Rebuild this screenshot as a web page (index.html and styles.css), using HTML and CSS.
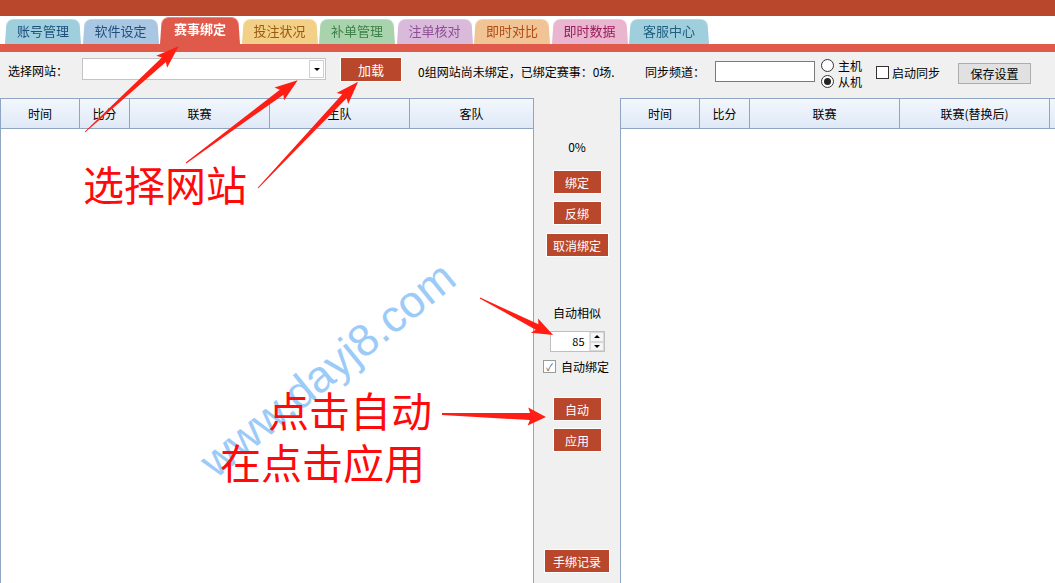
FILE: index.html
```html
<!DOCTYPE html>
<html lang="zh-CN">
<head>
    <meta charset="UTF-8">
    <title>赛事绑定</title>
    <link rel="stylesheet" href="styles.css">
</head>
<body>
<div class="app">
    <div class="topbar"></div>

    <div class="tabs">
        <div class="tab t-blue">账号管理</div>
        <div class="tab t-steel">软件设定</div>
        <div class="tab active">赛事绑定</div>
        <div class="tab t-yellow">投注状况</div>
        <div class="tab t-green">补单管理</div>
        <div class="tab t-purple">注单核对</div>
        <div class="tab t-orange">即时对比</div>
        <div class="tab t-pink">即时数据</div>
        <div class="tab t-teal">客服中心</div>
    </div>
    <div class="stripe"></div>

    <div class="toolbar">
        <span class="lbl-site">选择网站：</span>
        <div class="select"><span class="select-arrow"></span></div>
        <button class="btn btn-load">加载</button>
        <span class="info">0组网站尚未绑定，已绑定赛事：0场.</span>
        <span class="lbl-sync">同步频道：</span>
        <div class="textbox"></div>
        <div class="radios">
            <label class="radio"><i></i>主机</label>
            <label class="radio on"><i></i>从机</label>
        </div>
        <label class="check"><i></i>启动同步</label>
        <button class="btn-grey">保存设置</button>
    </div>

    <div class="main">
        <div class="grid grid-left">
            <div class="thead">
                <div class="th w80">时间</div>
                <div class="th w50">比分</div>
                <div class="th w140">联赛</div>
                <div class="th w140">主队</div>
                <div class="th fill">客队</div>
            </div>
            <div class="tbody"></div>
        </div>

        <div class="middle">
            <div class="pct">0%</div>
            <button class="btn btn-s gap-15">绑定</button>
            <button class="btn btn-s gap-7">反绑</button>
            <button class="btn btn-m gap-8">取消绑定</button>
            <div class="sim-lbl">自动相似</div>
            <div class="spin">
                <span class="spin-val">85</span>
                <span class="spin-btns"><b class="up"></b><b class="down"></b></span>
            </div>
            <label class="check check-auto on"><i>✓</i>自动绑定</label>
            <button class="btn btn-s gap-23">自动</button>
            <button class="btn btn-s gap-7">应用</button>
            <button class="btn btn-l bottom">手绑记录</button>
        </div>

        <div class="grid grid-right">
            <div class="thead">
                <div class="th w79">时间</div>
                <div class="th w50">比分</div>
                <div class="th w150">联赛</div>
                <div class="th w150">联赛(替换后)</div>
                <div class="th fill"></div>
            </div>
            <div class="tbody"></div>
        </div>
    </div>

    <!-- 截图上的标注 -->
    <div class="watermark">www.dayj8.com</div>
    <div class="note note-site">选择网站</div>
    <div class="note note-auto">点击自动</div>
    <div class="note note-apply">在点击应用</div>

    <svg class="arrows" width="1055" height="583" viewBox="0 0 1055 583">
        <polygon transform="translate(85 132) rotate(-42.5)" points="0,-0.5 107,-3 104,-8 127,0 104,8 107,3 0,0.5"/>
        <polygon transform="translate(186 163) rotate(-36.5)" points="0,-0.5 119,-3 116,-8 139,0 116,8 119,3 0,0.5"/>
        <polygon transform="translate(258 188) rotate(-46.7)" points="0,-0.5 126,-3 123,-8 146,0 123,8 126,3 0,0.5"/>
        <polygon transform="translate(480 298) rotate(26.9)" points="0,-0.5 64,-3 61,-8 82,0 61,8 64,3 0,0.5"/>
        <polygon transform="translate(442 414) rotate(1.65)" points="0,-1 88,-3.5 86,-9 104,0 86,9 88,3.5 0,1"/>
    </svg>
</div>
</body>
</html>
```

FILE: styles.css
```css
* {
    box-sizing: border-box;
}
body {
    margin: 0;
    font-family: "Noto Sans CJK SC", "Noto Sans", sans-serif;
    font-size: 12px;
    color: #000;
    background: #fff;
}
.app {
    position: relative;
    width: 1055px;
    height: 583px;
    overflow: hidden;
    display: flex;
    flex-direction: column;
}

/* 顶部色条 + 标签 */
.topbar {
    flex: none;
    height: 16px;
    background: #b9472c;
}
.tabs {
    flex: none;
    height: 28px;
    display: flex;
    align-items: flex-end;
    gap: 1.5px;
    padding-left: 5px;
}
.tab {
    position: relative;
    z-index: 0;
    width: 76px;
    height: 26px;
    display: flex;
    align-items: center;
    justify-content: center;
    padding-bottom: 2px;
    font-size: 13px;
    color: var(--fg);
}
.tab::before {
    /*梯形标签*/
    content: "";
    position: absolute;
    inset: 0;
    z-index: -1;
    background: var(--bg);
    border-radius: 7px 7px 0 0;
    transform: perspective(40px) rotateX(4deg);
    transform-origin: bottom;
}
.t-blue   { --bg: #9fcfdc; --fg: #1e4f7c; }
.t-steel  { --bg: #a9c6e3; --fg: #1e4f7c; }
.t-yellow { --bg: #f2d088; --fg: #9a5a10; }
.t-green  { --bg: #a9d3ad; --fg: #3f7f48; }
.t-purple { --bg: #d9badb; --fg: #8e4e94; }
.t-orange { --bg: #f1c496; --fg: #b24a10; }
.t-pink   { --bg: #e9b5cf; --fg: #9a1c5a; }
.t-teal   { --bg: #9fcfdc; --fg: #1f5f7f; width: 80px; }
.tab.active {
    --bg: #e05a4b;
    width: 80px;
    height: 28px;
    padding-bottom: 4px;
    color: #fff;
    font-weight: bold;
}
.stripe {
    flex: none;
    height: 8px;
    background: #e05a4b;
}

/* 工具栏 */
.toolbar {
    flex: none;
    height: 46px;
    padding-bottom: 10px;
    display: flex;
    align-items: center;
    background: #f0f0f0;
}
.toolbar > * {
    flex: none;
    white-space: nowrap;
}
.lbl-site {
    margin-left: 8px;
    width: 74px;
}
.select {
    position: relative;
    width: 244px;
    height: 22px;
    margin-top: -2px;
    background: #fff;
    border: 1px solid #c4c4c4;
}
.select-arrow {
    position: absolute;
    right: 1px;
    top: 1px;
    width: 15px;
    height: 18px;
    border: 1px solid #d0d0d0;
    background: #fff;
}
.select-arrow::after {
    content: "";
    position: absolute;
    left: 4px;
    top: 7px;
    border-left: 3px solid transparent;
    border-right: 3px solid transparent;
    border-top: 3px solid #000;
}
.btn {
    font-family: inherit;
    color: #fff;
    background: #b8472b;
    border: 1px solid #fff;
    padding: 0;
    font-size: 12px;
    white-space: nowrap;
}
.btn-load {
    width: 62px;
    height: 25px;
    margin-left: 14px;
    margin-top: -2px;
    font-size: 13px;
}
.info {
    width: 227px;
    margin-left: 16px;
    padding-top: 2px;
}
.lbl-sync {
    width: 70px;
    padding-top: 3px;
}
.textbox {
    width: 100px;
    height: 21px;
    margin-top: 2px;
    background: #fff;
    border: 1px solid #7a7a7a;
}
.radios {
    width: 55px;
    margin-left: 6px;
    margin-top: 6px;
    display: flex;
    flex-direction: column;
}
.radio, .check {
    display: flex;
    align-items: center;
    height: 16px;
    font-size: 12px;
    white-space: nowrap;
}
.radio i {
    flex: none;
    width: 13px;
    height: 13px;
    margin-right: 4px;
    border: 1px solid #333;
    border-radius: 50%;
    background: #fff;
    display: flex;
    align-items: center;
    justify-content: center;
}
.radio.on i::after {
    content: "";
    width: 7px;
    height: 7px;
    border-radius: 50%;
    background: #222;
}
.check {
    width: 82px;
    margin-top: 4px;
}
.check i {
    flex: none;
    width: 13px;
    height: 13px;
    margin-right: 3px;
    border: 1px solid #333;
    background: #fff;
    font-style: normal;
    font-size: 10px;
    line-height: 11px;
    text-align: center;
    color: #555;
}
.btn-grey {
    width: 73px;
    height: 21px;
    margin-top: 6px;
    padding: 0;
    font-family: inherit;
    font-size: 12px;
    color: #000;
    background: #e1e1e1;
    border: 1px solid #adadad;
}

/* 表格区域 */
.main {
    flex: 1;
    display: flex;
    background: #f0f0f0;
}
.grid {
    display: flex;
    flex-direction: column;
    background: #fff;
}
.grid-left {
    width: 534px;
    border-left: 1px solid #8ea5c3;
    border-right: 1px solid #8ea5c3;
}
.grid-right {
    flex: 1;
    border-left: 1px solid #8ea5c3;
}
.thead {
    height: 31px;
    display: flex;
    border-top: 1px solid #8ea5c3;
    border-bottom: 1px solid #8ea5c3;
    background: linear-gradient(#f3f7fd, #dfe9f6);
}
.th {
    display: flex;
    align-items: center;
    justify-content: center;
    border-right: 1px solid #8ea5c3;
}
.th.fill { flex: 1; border-right: 0; }
.w79 { width: 79px; }
.w80 { width: 79px; }
.w50 { width: 50px; }
.w140 { width: 140px; }
.w150 { width: 150px; }
.tbody {
    flex: 1;
}

/* 中间操作栏 */
.middle {
    width: 86px;
    display: flex;
    flex-direction: column;
    align-items: center;
    padding: 41px 0 10px;
}
.pct {
    line-height: 16px;
}
.btn-s { width: 49px; height: 24px; }
.btn-m { width: 63px; height: 24px; }
.btn-l { width: 66px; height: 24px; }
.gap-7 { margin-top: 7px; }
.gap-8 { margin-top: 8px; }
.gap-15 { margin-top: 15px; }
.gap-23 { margin-top: 23px; }
.bottom { margin-top: auto; }
.sim-lbl {
    margin-top: 48px;
    line-height: 16px;
}
.spin {
    margin-top: 10px;
    width: 55px;
    height: 21px;
    display: flex;
    background: #fff;
    border: 1px solid #bfbfbf;
}
.spin-val {
    flex: 1;
    text-align: right;
    padding-right: 4px;
    line-height: 19px;
    font-size: 11px;
}
.spin-btns {
    width: 15px;
    display: flex;
    flex-direction: column;
    border-left: 1px solid #e0e0e0;
}
.spin-btns b {
    flex: 1;
    position: relative;
    border: 1px solid #d8d8d8;
    background: #f6f6f6;
}
.spin-btns b::after {
    content: "";
    position: absolute;
    left: 3px;
    top: 2px;
    border-left: 3px solid transparent;
    border-right: 3px solid transparent;
}
.spin-btns .up::after { border-bottom: 3px solid #000; }
.spin-btns .down::after { border-top: 3px solid #000; }
.check-auto {
    width: auto;
    margin: 6px 0 0 -2px;
}
.check-auto i {
    border-color: #9a9a9a;
    margin-right: 5px;
}

/* 标注 */
.watermark {
    position: absolute;
    left: 220px;
    top: 440px;
    font-family: "Liberation Sans", sans-serif;
    font-size: 45px;
    line-height: 45px;
    color: #9ccbf8;
    transform-origin: 0 100%;
    transform: rotate(-39deg);
    white-space: nowrap;
}
.note {
    position: absolute;
    font-family: "Noto Sans CJK SC", sans-serif;
    font-size: 41px;
    line-height: 41px;
    color: #ff0a0a;
    white-space: nowrap;
}
.note-site { left: 83px; top: 163px; }
.note-auto { left: 268px; top: 389px; }
.note-apply { left: 220px; top: 441px; }
.arrows {
    position: absolute;
    left: 0;
    top: 0;
    pointer-events: none;
    fill: #ff1e14;
}
```
